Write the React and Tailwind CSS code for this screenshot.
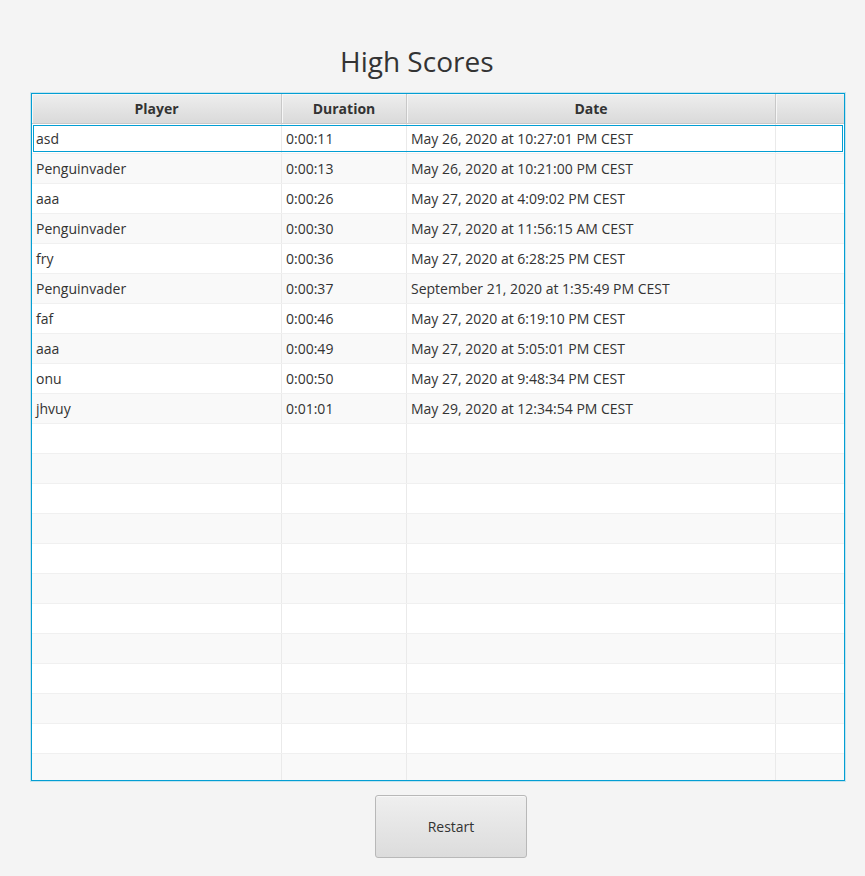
import React from 'react'

const scores = [
  { player: 'asd', duration: '0:00:11', date: 'May 26, 2020 at 10:27:01 PM CEST' },
  { player: 'Penguinvader', duration: '0:00:13', date: 'May 26, 2020 at 10:21:00 PM CEST' },
  { player: 'aaa', duration: '0:00:26', date: 'May 27, 2020 at 4:09:02 PM CEST' },
  { player: 'Penguinvader', duration: '0:00:30', date: 'May 27, 2020 at 11:56:15 AM CEST' },
  { player: 'fry', duration: '0:00:36', date: 'May 27, 2020 at 6:28:25 PM CEST' },
  { player: 'Penguinvader', duration: '0:00:37', date: 'September 21, 2020 at 1:35:49 PM CEST' },
  { player: 'faf', duration: '0:00:46', date: 'May 27, 2020 at 6:19:10 PM CEST' },
  { player: 'aaa', duration: '0:00:49', date: 'May 27, 2020 at 5:05:01 PM CEST' },
  { player: 'onu', duration: '0:00:50', date: 'May 27, 2020 at 9:48:34 PM CEST' },
  { player: 'jhvuy', duration: '0:01:01', date: 'May 29, 2020 at 12:34:54 PM CEST' },
]

const TOTAL_ROWS = 22

function HeaderCell({ children, className }) {
  return (
    <div
      className={`flex h-full items-center justify-center border-r border-[#c8c8c8] bg-gradient-to-b from-[#eeeeee] to-[#dadada] text-[14px] font-bold text-[#333] shadow-[inset_1px_1px_0_#f6f6f6] ${className}`}
    >
      {children}
    </div>
  )
}

function Row({ row, index }) {
  const selected = index === 0
  const bg = index % 2 === 0 ? 'bg-white' : 'bg-[#f9f9f9]'
  return (
    <div className={`relative flex h-[30px] shrink-0 border-b border-[#f0f0f0] ${bg}`}>
      <div className="flex w-[250px] items-center border-r border-[#eaeaea] pl-[4px]">{row?.player}</div>
      <div className="flex w-[125px] items-center border-r border-[#eaeaea] pl-[4px]">{row?.duration}</div>
      <div className="flex w-[369px] items-center border-r border-[#eaeaea] pl-[4px]">{row?.date}</div>
      <div className="flex-1" />
      {selected ? (
        <div className="pointer-events-none absolute inset-x-[1px] top-[1px] bottom-[1px] border border-[#039ed3]" />
      ) : null}
    </div>
  )
}

export default function App() {
  const rows = Array.from({ length: TOTAL_ROWS }, (_, i) => scores[i])
  return (
    <div
      className="min-h-[876px] w-[865px] bg-[#f4f4f4] text-[#333]"
      style={{ fontFamily: '"Open Sans", "Noto Sans", sans-serif' }}
    >
      <div className="flex flex-col pt-[42px]">
        <h1 className="ml-[340px] text-[28px] leading-[38px] text-[#333]">High Scores</h1>
        <div className="ml-[31px] mt-[13px] h-[688px] w-[814px] overflow-hidden border border-[#039ed3] shadow-[0_0_0_1px_rgba(3,158,211,0.2)]">
          <div className="flex h-[30px] border-b border-[#c8c8c8]">
            <HeaderCell className="w-[250px]">Player</HeaderCell>
            <HeaderCell className="w-[125px]">Duration</HeaderCell>
            <HeaderCell className="w-[369px]">Date</HeaderCell>
            <HeaderCell className="flex-1 border-r-0" />
          </div>
          <div className="flex flex-col text-[14px] text-[#333]">
            {rows.map((row, i) => (
              <Row key={i} row={row} index={i} />
            ))}
          </div>
        </div>
        <button
          type="button"
          className="ml-[375px] mt-[14px] h-[63px] w-[152px] rounded-[3px] border border-[#b8b8b8] bg-gradient-to-b from-[#efefef] to-[#dcdcdc] text-[14px] text-[#333] shadow-[inset_0_1px_0_#f8f8f8]"
        >
          Restart
        </button>
      </div>
    </div>
  )
}
